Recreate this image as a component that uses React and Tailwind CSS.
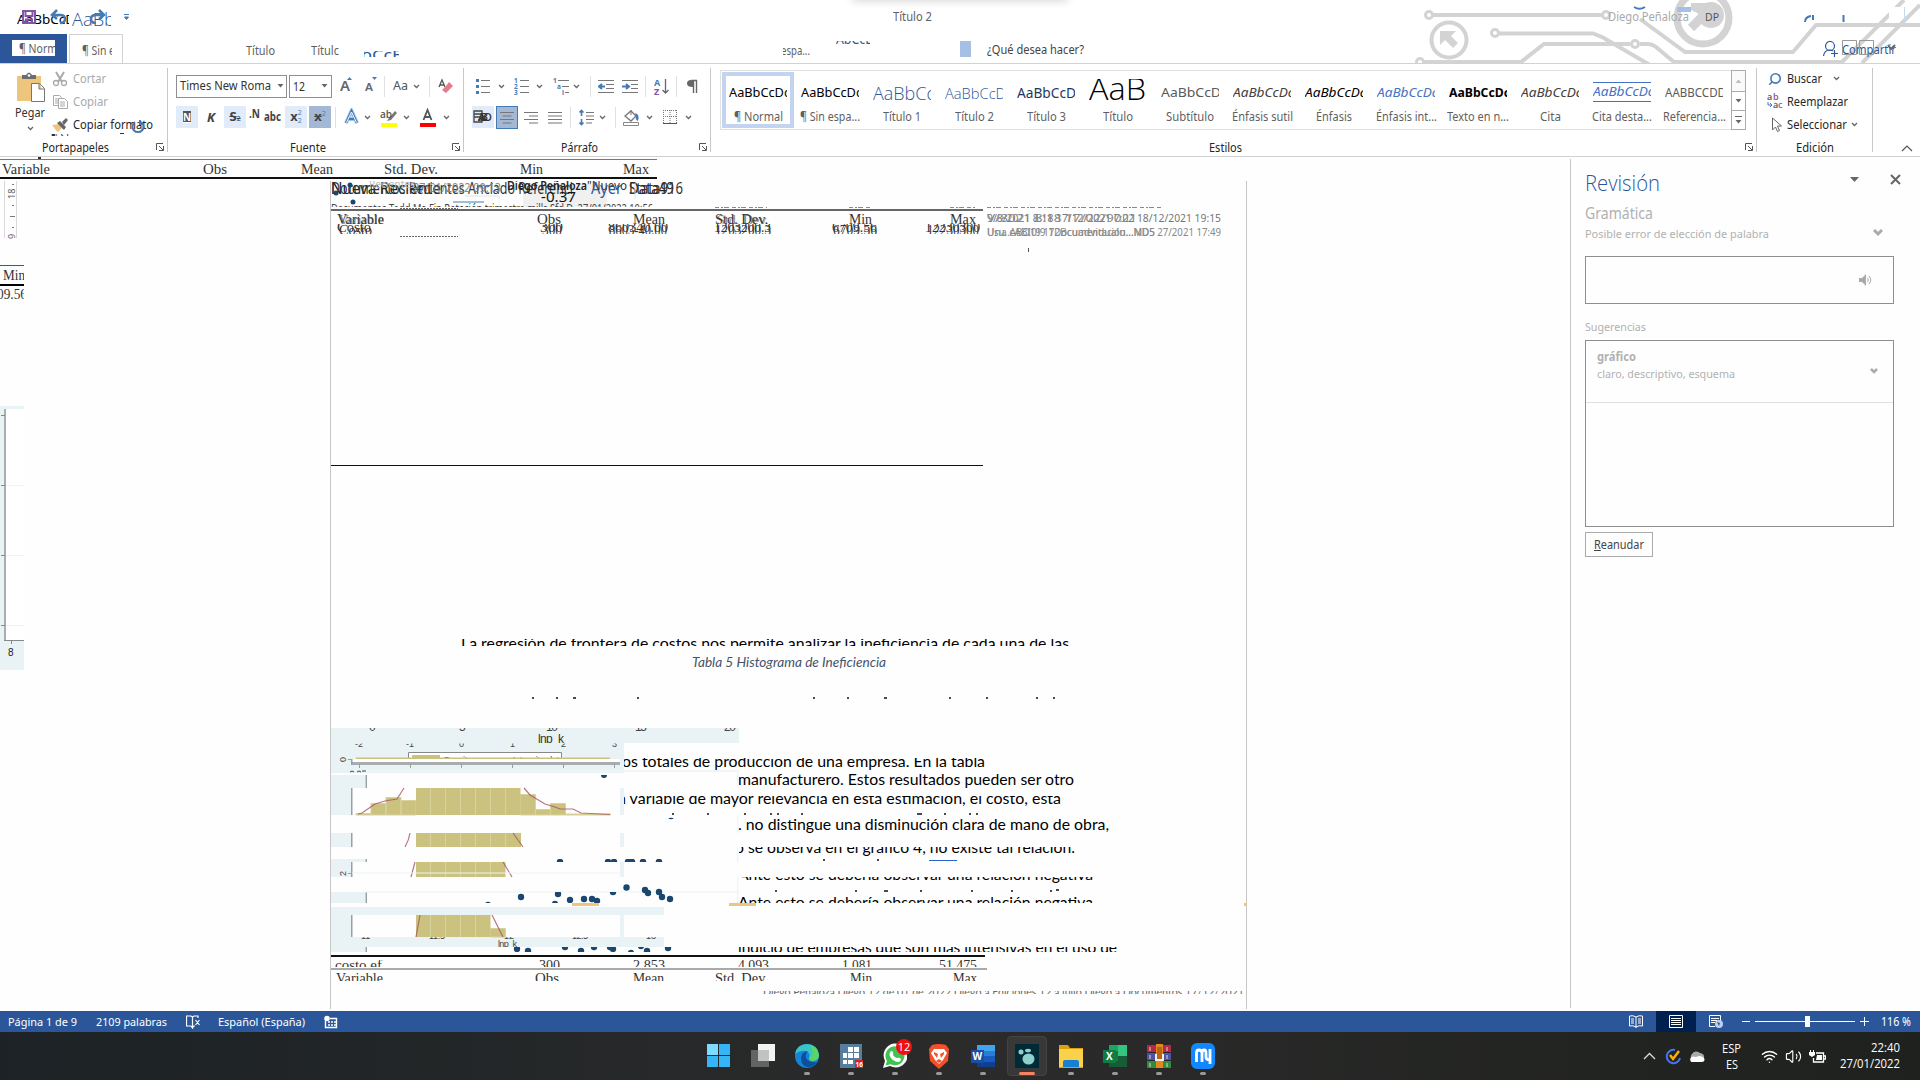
import React, { useLayoutEffect, useRef } from "react";
import { Search, Wifi, Volume2 } from "lucide-react";

/* Text stretched horizontally so that it fills the width of its box. */
function Fit({ className = "", children }) {
  const box = useRef(null);
  const text = useRef(null);
  useLayoutEffect(() => {
    text.current.style.transform = "none";
    const w = text.current.getBoundingClientRect().width;
    if (w) text.current.style.transform = `scaleX(${box.current.getBoundingClientRect().width / w})`;
  }, [children]);
  return (
    <div ref={box} className={"shrink-0 whitespace-nowrap " + className}>
      <span ref={text} className="inline-block origin-left">{children}</span>
    </div>
  );
}

const Svg = ({ w, h, className = "", children }) => (
  <svg width={w} height={h} viewBox={`0 0 ${w} ${h}`} fill="none" className={"block shrink-0 " + className}>{children}</svg>
);
const Chev = ({ className = "" }) => (
  <Svg w={7} h={5} className={className}><path d="M1 1l2.5 2.5L6 1" stroke="#666" strokeWidth="1.3" /></Svg>
);
const Caret = ({ className = "" }) => (
  <Svg w={7} h={4} className={className}><path d="M0.5 0h6L3.5 3.5z" fill="#666" /></Svg>
);
const Sep = ({ className = "" }) => <div className={"h-[21px] w-px shrink-0 bg-[#e1e1e1] " + className} />;
const Launcher = ({ className = "" }) => (
  <Svg w={8} h={8} className={className}>
    <path d="M.5 7V.5H7M3 3l4 4M7.5 3v4.5H3" stroke="#555" />
  </Svg>
);

/* ---------------------------------------------------------------- header */
function HeaderArt() {
  return (
    <svg width="520" height="63" viewBox="1400 0 520 63" fill="none" className="absolute right-0 top-0">
      <g stroke="#d3d3d3" strokeWidth="4">
        <circle cx="1429" cy="15" r="3.5" strokeWidth="3" />
        <path d="M1433 15H1602M1640 19l45 33h108l23-27h104" strokeLinejoin="round" />
        <circle cx="1606" cy="15" r="3.5" strokeWidth="3" />
        <circle cx="1449" cy="40" r="17.5" />
        <circle cx="1495" cy="33" r="3.5" strokeWidth="3" />
        <path d="M1499 33.500h94l10 4 46 27" />
        <circle cx="1420" cy="62" r="3.5" strokeWidth="3" />
        <path d="M1424 62h97l23-18h86M1640 44h8q4 0 8 3l18 15h168l62-62M1862 63l58-58" />
        <circle cx="1635" cy="44" r="3.500" strokeWidth="3" />
        <circle cx="1703" cy="18" r="26" strokeWidth="7" />
        <path d="M1691 28l20-20" strokeWidth="9" />
      </g>
      <path d="M1440 31h16l-5 5 7 7-5 5-8-8-5 5zM1691 3h22v20h-4l-8-8-10-5z" fill="#d3d3d3" />
      <circle cx="1711" cy="15" r="13" fill="#d3d3d3" />
      <path d="M1889 7h14l-14 16z" fill="#fff" />
      <path d="M1677 7h14v5h-14z" fill="#a5bfe5" />
      <path d="M1634 7q5.500 3.500 11 0" stroke="#457ab5" strokeWidth="2" />
      <path d="M1805 22q0-5 6-6M1813 15v5M1843.500 15v7" stroke="#457ab5" strokeWidth="2" />
      <path d="M1904.500 7v16" stroke="#c8d9ef" />
    </svg>
  );
}

function Header() {
  return (
    <header className="relative h-16 overflow-hidden border-b border-[#d2d2d2] bg-white">
      <HeaderArt />
      <div className="absolute -top-1 left-[852px] h-1 w-[216px] shadow-[0_0_8px_rgba(0,0,0,0.28)]" />
      <div className="relative flex h-[34px] items-center">
        <div className="relative ml-[17px] mt-[3px] h-5 w-[52px] shrink-0 overflow-hidden">
          <Fit className="w-[58px] text-[13px] leading-5 text-black">AaBbCcD</Fit>
        </div>
        <div className="ml-[3px] mt-[3px] h-6 w-[39px] shrink-0 overflow-hidden">
          <Fit className="w-[43px] font-['Open_Sans',sans-serif] text-[19px] font-light leading-6 text-[#2b579a]">AaBb</Fit>
        </div>
        <Svg w={7} h={7} className="ml-[12px]"><path d="M1 .5h5M1.500 3h4L3.500 5.500z" stroke="#457ab5" fill="#457ab5" /></Svg>
        <Fit className="ml-[763px] w-[39px] text-[12px] text-[#5f5f5f]">Título 2</Fit>
        <Fit className="ml-[676px] w-[81px] text-[12px] leading-[16px] text-[#aaa]">Diego Peñaloza</Fit>
        <Fit className="ml-[16px] w-[14px] text-[11px] leading-[14px] text-[#555]">DP</Fit>
        <div className="absolute left-[22px] top-[10px]">
          <Svg w={14} h={14}><path d="M1 1h12v12H1z M3.500 1v5h7V1M4 13V9.500h6V13" stroke="#8254a5" strokeWidth="2" /></Svg>
        </div>
        <div className="absolute left-[50px] top-[9px]">
          <Svg w={18} h={16}><path d="M2 6h8q5 0 5 4t-5 4M7 1L2 6l5 4" stroke="#457ab5" strokeWidth="2.500" /></Svg>
        </div>
        <div className="absolute left-[89px] top-[9px]">
          <Svg w={17} h={16}><path d="M15 6H7Q2 6 2 10t5 4M10 1l5 5-5 4" stroke="#457ab5" strokeWidth="2.500" /></Svg>
        </div>
      </div>
      <div className="relative flex h-[30px] items-start text-[12px] text-[#5f5f5f]">
        <div className="flex h-[29px] w-[67px] shrink-0 bg-[#2b579a] pl-3 pt-[6px]">
          <div className="h-4 w-[43px] overflow-hidden bg-white pl-[7px]">
            <Fit className="w-[38px] leading-[18px]">¶ Norm</Fit>
          </div>
        </div>
        <div className="ml-[2px] h-[30px] w-[54px] shrink-0 border border-b-0 border-[#d2d2d2] bg-white pl-3">
          <div className="w-[30px] overflow-hidden"><Fit className="w-[33px] leading-[31px]">¶ Sin e</Fit></div>
        </div>
        <Fit className="ml-[123px] w-[29px] leading-[33px]">Título</Fit>
        <Fit className="ml-[36px] w-[28px] leading-[33px]">Títulc</Fit>
        <div className="ml-[25px] mt-[17px] h-[6px] w-[35px] shrink-0 overflow-hidden">
          <Fit className="-ml-[3px] -mt-[6px] w-[41px] text-[14px] leading-5 text-[#2b579a]">bCcE</Fit>
        </div>
        <div className="ml-[384px] w-[27px] shrink-0 overflow-hidden"><Fit className="-ml-[2px] w-[29px] leading-[33px]">espa...</Fit></div>
        <div className="ml-[26px] mt-[7px] h-[3px] w-[34px] shrink-0 overflow-hidden">
          <Fit className="-mt-[13px] w-[36px] text-[15px] leading-5 text-[#2b579a]">AbCcE</Fit>
        </div>
        <div className="ml-[90px] mt-[7px] h-4 w-[11px] shrink-0 bg-[#a5bfe5]" />
        <Fit className="ml-[16px] w-[97px] leading-[31px] text-[#444]">¿Qué desea hacer?</Fit>
        <Svg w={16} h={17} className="ml-[739px] mt-[7px]">
          <circle cx="7" cy="5" r="4.500" stroke="#2b579a" strokeWidth="1.200" />
          <path d="M.500 15q1-6 6-6 2 0 3.500 1M8 12.500h7M11.500 9v7" stroke="#2b579a" strokeWidth="1.200" />
        </Svg>
        <div className="relative ml-[3px]">
          <Fit className="w-[54px] leading-[31px] text-[#2b579a]">Compartir</Fit>
          <Svg w={54} h={16} className="absolute left-0 top-[6px]">
            <path d="M.500.500h14v14H.500zM17.500.500h14v14h-14z" stroke="#999" />
            <path d="M46 5l3 4 4-4" stroke="#666" strokeWidth="2" />
          </Svg>
        </div>
      </div>
    </header>
  );
}

/* ---------------------------------------------------------------- ribbon */
const Group = ({ className, label, launcher = true, labelClass, children }) => (
  <section className={"relative flex h-[92px] shrink-0 flex-col " + className}>
    {children}
    <div className="mt-auto flex h-[18px] items-center">
      <Fit className={"pt-[2px] text-[12px] leading-[18px] text-[#262626] " + labelClass}>{label}</Fit>
      {launcher && <Launcher className="ml-auto mr-[4px]" />}
    </div>
    <div className="absolute right-0 top-1 h-[84px] w-px bg-[#c8c8c8]" />
  </section>
);

function Clipboard() {
  return (
    <Group className="w-[168px]" label="Portapapeles" labelClass="ml-[42px] w-[67px]">
      <div className="flex">
        <div className="ml-[14px] flex w-[32px] shrink-0 flex-col items-center pt-[7px]">
          <Svg w={30} h={32}>
            <path d="M2 5h24v25H2z" fill="#eec57c" />
            <path d="M7 8V4h4q3-5 6 0h4v4z" fill="#6d6d6d" /><circle cx="14" cy="4.500" r="1.300" fill="#fff" />
            <path d="M16.500 12.500h8l5 5v13h-13zM24 13v5h5" fill="#fff" stroke="#777" />
          </Svg>
          <Fit className="w-[30px] text-[12px] leading-5 text-[#333]">Pegar</Fit>
          <Chev className="mt-[3px]" />
        </div>
        <div className="ml-[6px] mt-[3px] text-[12px]">
          <div className="flex h-[23px] items-center text-[#aaa]">
            <Svg w={16} h={16}><path d="M4 1l6 10M12 1L6 11" stroke="#aaa" strokeWidth="2" /><circle cx="4" cy="12" r="2.500" stroke="#aaa" strokeWidth="1.300" /><circle cx="12" cy="12" r="2.500" stroke="#aaa" strokeWidth="1.300" /></Svg>
            <Fit className="ml-[5px] w-[33px]">Cortar</Fit>
          </div>
          <div className="flex h-[23px] items-center text-[#aaa]">
            <Svg w={16} h={16}><path d="M1.500 1.500h6l2 2v8h-8zM3 5h4M3 7h4M3 9h3" stroke="#aaa" /><path d="M6.500 4.500h6l3 3v7h-9zM8 8h5M8 10h5M8 12h5" fill="#fff" stroke="#aaa" /></Svg>
            <Fit className="ml-[5px] w-[35px]">Copiar</Fit>
          </div>
          <div className="relative flex h-[23px] items-center text-[#262626]">
            <Svg w={16} h={16}><path d="M0 8l7-1 3 4-4 4q-2-1-3-3z" fill="#eec57c" /><path d="M5 6l3-2 6 6-2 3zM10 5l4-4 2 2-4 5z" fill="#666" /></Svg>
            <Fit className="ml-[5px] w-[80px]">Copiar formato</Fit>
            <Svg w={14} h={15} className="absolute left-[79px] top-[6px]"><path d="M4 3A5.500 5.500 0 1 0 10 3M9 1v4h4" stroke="#457ab5" strokeWidth="2" /></Svg>
            <div className="absolute left-[-1px] top-[21px] h-[2px] w-[20px] overflow-hidden"><Fit className="-mt-[3px] w-[18px] text-[12px] leading-3 text-[#333]">¶ Si</Fit></div>
            <div className="absolute left-[68px] top-[20px] h-px w-[4px] bg-[#333]" />
          </div>
        </div>
      </div>
    </Group>
  );
}

function Fuente() {
  return (
    <Group className="w-[296px]" label="Fuente" labelClass="ml-[122px] w-[36px]">
      <div className="mt-[10px] flex h-6 items-center text-[12px] text-[#333]">
        <div className="ml-[8px] flex h-[23px] w-[111px] shrink-0 items-center border border-[#8e8e8e]"><Fit className="ml-[3px] w-[91px] pt-px text-[12.500px]">Times New Roma</Fit><Caret className="ml-[6px]" /></div>
        <div className="ml-[2px] flex h-[23px] w-[43px] shrink-0 items-center border border-[#8e8e8e]"><Fit className="ml-[3px] w-[12px] pt-px">12</Fit><Caret className="ml-[16px]" /></div>
        <div className="relative ml-[8px] w-4"><Fit className="w-[10px] text-[14px] font-semibold leading-5 text-[#666]">A</Fit><Svg w={5} h={3} className="absolute right-1 top-[1px]"><path d="M0 3h5L2.500 0z" fill="#457ab5" /></Svg></div>
        <div className="relative ml-[9px] w-4"><Fit className="mt-px w-[8px] text-[11px] font-semibold leading-5 text-[#666]">A</Fit><Svg w={5} h={3} className="absolute right-1 top-[1px]"><path d="M0 0h5L2.500 3z" fill="#457ab5" /></Svg></div>
        <Sep className="ml-[3px]" />
        <Fit className="ml-[8px] w-[15px] text-[13px] text-[#555]">Aa</Fit><Chev className="ml-[5px]" />
        <Sep className="ml-[9px]" />
        <Svg w={16} h={17} className="ml-[8px]"><path d="M1 9L4 2l3 7M2 7h4" stroke="#555" strokeWidth="1.300" /><path d="M8 8l3-4 4 4-7 7-4-3z" fill="#e8798c" /></Svg>
      </div>
      <div className="mt-[7px] flex h-6 items-center text-[#444]">
        <div className="ml-[8px] flex h-[22px] w-[22px] shrink-0 items-center justify-center bg-[#e1ebfa]"><span className="bg-[#555] text-[10px] font-bold leading-3 text-white underline">N</span></div>
        <div className="ml-[2px] flex h-[22px] w-[22px] shrink-0 items-center justify-center text-[13px] font-bold italic"><Fit className="w-[8px] leading-5">K</Fit></div>
        <div className="ml-[2px] flex h-[22px] w-[22px] shrink-0 items-center justify-center bg-[#e1ebfa] text-[13px] font-bold line-through">S<sub className="text-[7px] text-[#457ab5]">2</sub></div>
        <Fit className="-mt-[6px] ml-[3px] w-[11px] text-[12px] font-bold leading-4">.N</Fit>
        <Fit className="ml-[4px] w-[17px] text-[12px] font-bold line-through">abc</Fit>
        <div className="ml-[4px] flex h-[22px] w-[22px] shrink-0 items-center justify-center bg-[#e1ebfa]"><b className="text-[13px]">x</b><span className="flex flex-col text-[7px] leading-[8px] text-[#457ab5]"><span>2</span><span>2</span></span></div>
        <div className="ml-[2px] flex h-[22px] w-[22px] shrink-0 items-center justify-center bg-[#a3b8d4]"><b className="text-[13px] line-through">x</b><sup className="text-[7px] text-[#457ab5]">2</sup></div>
        <Sep className="ml-[4px]" />
        <Svg w={16} h={18} className="ml-[8px]"><path d="M2 15L7.500 3 13 15M4.500 11h6" stroke="#a9c6ea" strokeWidth="4" /><path d="M2 15L7.500 3 13 15M4.500 11h6" stroke="#457ab5" strokeWidth="2.200" /><path d="M2.500 14.500L7.500 4l5 10.500" stroke="#fff" strokeWidth="1" /></Svg>
        <Chev className="ml-[4px]" />
        <Svg w={18} h={19} className="ml-[9px]"><path d="M9 10l6-7 2 2-6 7-4 1z" fill="#777" /><path d="M1 15h16v4H1z" fill="#ff0" /><text x="0" y="10" fontSize="10" fontWeight="600" fill="#555" fontFamily="Open Sans">ab</text></Svg>
        <Chev className="ml-[5px]" />
        <Svg w={18} h={19} className="ml-[9px]"><path d="M4.500 12L8.500 2l4 10M6 9h5" stroke="#555" strokeWidth="1.800" /><path d="M1 15h16v4H1z" fill="#f00" /></Svg>
        <Chev className="ml-[6px]" />
      </div>
    </Group>
  );
}

const Lines = ({ d }) => <path d={d} stroke="#777" strokeWidth="1.200" />;

function Parrafo() {
  return (
    <Group className="w-[247px]" label="Párrafo" labelClass="ml-[97px] w-[37px]">
      <div className="mt-[10px] flex h-6 items-center">
        <Svg w={14} h={15} className="ml-[12px]"><Lines d="M5 1.500h9M5 7.500h9M5 13.500h9" /><path d="M0 0h3v3H0zM0 6h3v3H0zM0 12h3v3H0z" fill="#457ab5" /></Svg>
        <Chev className="ml-[8px]" />
        <Svg w={16} h={17} className="ml-[9px]"><Lines d="M6 2.500h9M6 8.500h9M6 14.500h9" /><g fill="#457ab5" fontFamily="Open Sans" fontSize="6.500" fontWeight="700"><text x="0" y="5">1</text><text x="0" y="11">2</text><text x="0" y="17">3</text></g></Svg>
        <Chev className="ml-[6px]" />
        <Svg w={17} h={17} className="ml-[10px]"><Lines d="M5 2.500h11M9 8.500h7M12 14.500h4" /><g fill="#457ab5" fontFamily="Open Sans" fontSize="6.500" fontWeight="700"><text x="0" y="5">1</text><text x="4" y="11">a</text><text x="9" y="17">i</text></g></Svg>
        <Chev className="ml-[3px]" />
        <Sep className="ml-[10px]" />
        <Svg w={16} h={15} className="ml-[7px]"><Lines d="M0 1.500h16M8 5.500h8M8 9.500h8M0 13.500h16" /><path d="M7 7.500H1M4 5L1 7.500 4 10" stroke="#457ab5" strokeWidth="2" /></Svg>
        <Svg w={16} h={15} className="ml-[8px]"><Lines d="M0 1.500h16M9 5.500h7M9 9.500h7M0 13.500h16" /><path d="M0 7.500h6M4 5l3 2.500L4 10" stroke="#457ab5" strokeWidth="2" /></Svg>
        <Sep className="ml-[7px]" />
        <Svg w={16} h={17} className="ml-[8px]"><g fontFamily="Open Sans" fontSize="9" fontWeight="700"><text x="0" y="8" fill="#457ab5">A</text><text x="0" y="17" fill="#8254a5">Z</text></g><path d="M11.500 1v14M8.500 12l3 3 3-3" stroke="#666" strokeWidth="1.300" /></Svg>
        <Sep className="ml-[6px]" />
        <Svg w={14} h={15} className="ml-[9px]"><path d="M11 1.500H5M7.500 1v13M10.500 1v13" stroke="#666" strokeWidth="1.400" /><path d="M7 1v7Q1 8 1 4.500T5 1z" fill="#666" /></Svg>
      </div>
      <div className="mt-[7px] flex h-6 items-center">
        <div className="ml-[8px] flex h-[22px] w-[22px] shrink-0 items-center bg-[#e1ebfa]"><Svg w={20} h={14} className="ml-px"><path d="M1 1h8v11H1zM1 4h9M1 7h9M5 10h8" stroke="#444" strokeWidth="1.300" /><text x="5" y="11" fontSize="11" fontWeight="600" fill="#333" fontFamily="Open Sans" textLength="14">ABO</text></Svg></div>
        <div className="ml-[2px] flex h-[23px] w-[22px] shrink-0 items-center justify-center border border-[#457ab5] bg-[#a3b8d4]"><Svg w={14} h={13}><Lines d="M0 1.500h14M2.500 5h9M0 8.500h14M2.500 12h9" /></Svg></div>
        <Svg w={14} h={13} className="ml-[6px]"><Lines d="M0 1.500h14M5 5h9M0 8.500h14M5 12h9" /></Svg>
        <Svg w={14} h={13} className="ml-[10px]"><Lines d="M0 1.500h14M0 5h14M0 8.500h14M0 12h14" /></Svg>
        <Sep className="ml-[8px]" />
        <Svg w={16} h={17} className="ml-[8px]"><Lines d="M7 3.500h8M7 7h8M7 10.500h8M7 14h6" /><path d="M2.500 1v6M2.500 10v6M.5 3.500l2-2 2 2M.5 13.500l2 2 2-2" stroke="#457ab5" strokeWidth="1.600" /></Svg>
        <Chev className="ml-[4px]" />
        <Sep className="ml-[9px]" />
        <Svg w={17} h={17} className="ml-[7px]"><path d="M2 7l6-5 5 5-5 5z" fill="#fff" stroke="#777" strokeWidth="1.300" /><path d="M8 1v5" stroke="#777" /><path d="M12 4q5 1 3 8-3-1-2-5z" fill="#457ab5" /><path d="M.5 13.500h15v3H.5z" stroke="#888" fill="#fff" /></Svg>
        <Chev className="ml-[6px]" />
        <Svg w={14} h={14} className="ml-[10px]"><path d="M.5 0v13M7 0v13M13.500 0v13M0 .5h14M0 6.500h14" stroke="#777" strokeDasharray="1 1" /><path d="M0 13.500h14" stroke="#555" /></Svg>
        <Chev className="ml-[8px]" />
      </div>
    </Group>
  );
}

const STYLES = [
  ["¶ Normal", "w-[49px]", "AaBbCcDc", "w-[61px] text-[13px] text-black"],
  ["¶ Sin espa...", "w-[60px]", "AaBbCcDc", "w-[61px] text-[13px] text-black"],
  ["Título 1", "w-[38px]", "AaBbCc", "w-[62px] text-[18px] font-light font-['Open_Sans',sans-serif] text-[#2b579a]"],
  ["Título 2", "w-[39px]", "AaBbCcD", "w-[61px] text-[15px] font-light font-['Open_Sans',sans-serif] text-[#2b579a]"],
  ["Título 3", "w-[39px]", "AaBbCcD", "w-[59px] text-[13.500px] text-[#1f3763]"],
  ["Título", "w-[30px]", "AaB", "w-[57px] pb-[7px] text-[31px] font-light font-['Open_Sans',sans-serif] text-black leading-[24px]"],
  ["Subtítulo", "w-[48px]", "AaBbCcD", "w-[60px] text-[13px] text-[#5a5a5a]"],
  ["Énfasis sutil", "w-[61px]", "AaBbCcDc", "w-[61px] text-[13px] italic text-[#404040]"],
  ["Énfasis", "w-[36px]", "AaBbCcDc", "w-[61px] text-[13px] italic text-black"],
  ["Énfasis int...", "w-[61px]", "AaBbCcDc", "w-[61px] text-[13px] italic text-[#4472c4]"],
  ["Texto en n...", "w-[62px]", "AaBbCcDc", "w-[61px] text-[13px] font-bold text-black"],
  ["Cita", "w-[21px]", "AaBbCcDc", "w-[61px] text-[13px] italic text-[#404040]"],
  ["Cita desta...", "w-[60px]", "AaBbCcDc", "w-[61px] text-[13px] italic text-[#4472c4]"],
  ["Referencia...", "w-[63px]", "AABBCCDD", "w-[61px] text-[12px] text-[#5a5a5a] [font-variant:small-caps]"],
];

function Estilos() {
  return (
    <Group className="w-[1046px]" label="Estilos" labelClass="ml-[498px] w-[33px]">
      <div className="ml-[9px] mt-[6px] flex h-[60px] w-[1026px] shrink-0 border border-[#e1e1e1]">
        {STYLES.map(([name, w, sample, cls], i) => (
          <div key={i} className={i === 0 ? "flex h-[56px] w-[72px] mt-px ml-px shrink-0 flex-col items-center border-4 border-[#c2d4f0]" : "mt-px flex h-[56px] w-[72px] shrink-0 flex-col items-center pt-1"}>
            <div className={i === 12 ? "mt-[6px] flex h-5 w-[58px] shrink-0 items-center overflow-hidden border-y border-[#4472c4]" : i === 5 ? "mt-[3px] flex h-6 w-[58px] shrink-0 items-center overflow-hidden" : "mt-[5px] flex h-6 w-[58px] shrink-0 items-center overflow-hidden"}>
              <Fit className={cls}>{sample}</Fit>
            </div>
            <Fit className={(i === 12 ? "mt-[6px] " : i === 5 ? "mt-[5px] " : "mt-[3px] ") + "text-[12px] leading-[18px] text-[#5f5f5f] " + w}>{name}</Fit>
          </div>
        ))}
        <div className="-my-px -mr-px ml-auto flex w-[15px] flex-col border border-[#ababab]">
          <div className="flex h-[20px] items-center justify-center bg-[#fafafa]"><Caret className="rotate-180 opacity-40" /></div>
          <div className="flex h-[20px] items-center justify-center border-y border-[#ababab]"><Caret /></div>
          <div className="flex flex-1 flex-col items-center justify-center gap-[3px]"><div className="h-px w-[7px] bg-[#666]" /><Caret /></div>
        </div>
      </div>
    </Group>
  );
}

function Ribbon() {
  return (
    <div className="flex h-[93px] border-b border-[#d2d2d2] bg-white">
      <Clipboard />
      <Fuente />
      <Parrafo />
      <Estilos />
      <Group className="w-[116px]" label="Edición" labelClass="ml-[39px] w-[38px]" launcher={false}>
        <div className="ml-[11px] mt-[3px] text-[12px] text-[#262626]">
          <div className="flex h-[23px] items-center"><Search size={14} strokeWidth={2.800} color="#457ab5" className="-scale-x-100" /><Fit className="ml-[5px] w-[35px]">Buscar</Fit><Chev className="ml-[11px]" /></div>
          <div className="flex h-[23px] items-center">
            <Svg w={17} h={17} className="-ml-px"><g fontFamily="Open Sans" fontSize="9" fontWeight="600"><text x="0" y="7" fill="#555">a</text><text x="6" y="7" fill="#8254a5">b</text><text x="6" y="15" fill="#555">a</text><text x="11" y="15" fill="#457ab5">c</text></g><path d="M1 9v3h3M3 10l2 2-2 2" stroke="#457ab5" /></Svg>
            <Fit className="ml-[3px] w-[61px]">Reemplazar</Fit>
          </div>
          <div className="flex h-[23px] items-center"><Svg w={14} h={16}><path d="M4.500 1v12l3-3 2 4.500 2-1-2-4.500h4z" stroke="#666" /></Svg><Fit className="ml-[5px] w-[60px]">Seleccionar</Fit><Chev className="ml-[4px]" /></div>
        </div>
      </Group>
      <Svg w={12} h={7} className="mb-[4px] ml-[28px] self-end"><path d="M1 6l5-5 5 5" stroke="#555" strokeWidth="1.200" /></Svg>
    </div>
  );
}

/* -------------------------------------------------------------- document */
const Serif = ({ className, children }) => <Fit className={"absolute font-['Liberation_Serif',serif] text-[15px] leading-5 text-[#333] " + className}>{children}</Fit>;
const Band = ({ className, inner, children }) => (
  <div className={"absolute overflow-hidden " + className}>
    <Fit className={"font-[Lato,sans-serif] text-[16px] leading-5 text-black " + inner}>{children}</Fit>
  </div>
);

const BG = "#e9f2f4";
const KH = "#cac27e";
const DOTS = [[521, 897], [570, 900], [584, 899], [592, 899], [597, 901], [555, 904], [488, 905], [558, 894], [613, 892], [645, 890], [648, 893], [659, 892], [662, 897], [670, 899]];
const LOW = [[517, 949], [528, 951], [565, 947], [581, 951], [594, 947], [610, 947], [613, 949], [631, 953], [641, 946], [647, 951], [668, 948]];

function Charts() {
  return (
    <svg width="420" height="235" viewBox="331 725 420 235" className="absolute left-[331px] top-[725px]" fontFamily="Liberation Sans" fontSize="9" fill="#444">
      <defs>
        <clipPath id="k1"><path d="M331 728h410v15H331z" /></clipPath>
        <clipPath id="k2"><path d="M331 743.500h300v15H331z" /></clipPath>
        <clipPath id="k3"><path d="M331 775h410v13H331z" /></clipPath>
        <clipPath id="k4"><path d="M331 859h410v3H331z" /></clipPath>
        <clipPath id="k5"><path d="M331 892h293v11H331zM624 877h117v26H624z" /></clipPath>
        <clipPath id="k6"><path d="M331 947h410v5H331z" /></clipPath>
        <clipPath id="k7"><path d="M331 937h410v10H331z" /></clipPath>
      </defs>
      <path d="M331 728h408v15H624v30H331zM331 775h34v13h-13v27h-21zM331 833h21v14h-21zM331 859h34v3h-13v15h-21zM331 892h34v11h-34zM331 907h333v8H331zM331 915h21v22h-21zM331 937h333v10H331zM331 947h34v5h-34zM620 788h4v27h-4zM620 833h4v14h-4zM620 862h4v15h-4zM620 915h4v22h-4z" fill={BG} />
      <path d="M365 770h374v2H365zM737 770h1.500v18H737zM737 815h1.500v18H737zM737 847h1.500v15H737zM737 877h1.500v26H737z" fill="#eff5f6" />
      <path d="M352 759h268v11H352z" fill="#fff" />
      <path d="M352 762h268v3H352z" fill="#a8adb0" />
      <path d="M331 765h289v5H331z" fill={BG} />
      <g fill="#999fa3">
        <path d="M351 759h1.500v6H351zM351 788h1.500v27H351zM351 833h1.500v14H351zM351 862h1.500v15H351zM351 915h1.500v22H351zM365.500 775h1.500v13h-1.500zM365.500 859h1.500v3h-1.500zM365.500 892h1.500v11h-1.500zM365.500 947h1.500v5h-1.500z" />
        <path d="M359 764h1v4h-1zM410 764h1v4h-1zM461 764h1v4h-1zM512 764h1v4h-1zM563 764h1v4h-1zM614 764h1v4h-1zM348 759h4v1h-4zM348 873h4v1h-4z" />
      </g>
      <g clipPath="url(#k1)" fontSize="12">
        <text x="369" y="731">0</text><text x="459" y="731">5</text><text x="546" y="731" textLength="12">10</text><text x="635" y="731" textLength="12">15</text><text x="724" y="731" textLength="12">20</text>
        <text x="538" y="743" textLength="26" fill="#333">lnp_k</text>
      </g>
      <g clipPath="url(#k2)">
        <text x="355" y="747">-2</text><text x="406" y="747">-1</text><text x="459" y="747">0</text><text x="510" y="747">1</text><text x="561" y="747">2</text><text x="612" y="747">3</text>
        <path d="M408.500 752.500h153v8h-153z" fill="#fff" stroke="#888" /><path d="M412 755h28v4h-28z" fill={KH} />
        <text x="444" y="763" textLength="27">Density</text><text x="513" y="763" textLength="46">Intensity plot</text>
      </g>
      <path d="M356 757.500h254v1.500H356z" fill={KH} />
      <text transform="translate(346 762) rotate(-90)">0</text>
      <text transform="translate(346 876) rotate(-90)">2</text>
      <path d="M350 772q2-2 4 0M357 772q2-2 4 0M362 771h4" stroke="#444" fill="none" />
      <g stroke="#d8d29b" fill={KH}>
        <path d="M356 813.500h15V815h-15zM371 803.500h15V815h-15zM386 797.500h15V815h-15zM401 800.500h15V815h-15zM520.500 794.500h15V815h-15zM535.500 809.500h15V815h-15zM550.500 803.500h15V815h-15zM565.500 814h45v1h-45zM490.500 928.500h15V937h-15z" />
      </g>
      <path d="M416 788h104.500v27H416zM416 833h105v14H416zM416 862h89.500v15H416zM416 915h74.500v22H416z" fill={KH} />
      <path d="M430.500 788v27M445.500 788v27M460.500 788v27M475.500 788v27M490.500 788v27M505.500 788v27M430.500 833v14M445.500 833v14M460.500 833v14M475.500 833v14M490.500 833v14M505.500 833v14M430.500 862v15M445.500 862v15M460.500 862v15M475.500 862v15M490.500 862v15M430.500 915v22M445.500 915v22M460.500 915v22M475.500 915v22" stroke="#d8d29b" />
      <path d="M358 814l4-1 13-9 10-3 12-2 7-11M524 788l6 7 15 9 10 3 5 2h13l8 4 29 1.500M410 833q-1 7-5 14M513 833l10 14M415 862l-4 15M503 862l9 15M420 915l-4 22M492 915l11 22" fill="none" stroke="#a85560" strokeWidth="1.200" strokeOpacity=".8" />
      <path d="M352 873h268M365 892h374" stroke="#eef4f5" />
      <g fill="#1a476f">
        <g clipPath="url(#k3)"><circle cx="604" cy="775" r="3" /></g>
        <ellipse cx="671" cy="818.500" rx="2.500" ry=".8" />
        <g clipPath="url(#k4)">{[560, 608, 614, 628, 632, 643, 659].map((x) => <circle key={x} cx={x} cy={862} r="3.300" />)}</g>
        <g clipPath="url(#k5)">{DOTS.map(([x, y], i) => <circle key={i} cx={x} cy={y} r="3.200" />)}</g>
        <circle cx="626.500" cy="887.500" r="3.200" />
        <g clipPath="url(#k6)">{LOW.map(([x, y], i) => <circle key={i} cx={x} cy={y} r="3.200" />)}</g>
      </g>
      <path d="M572 903h27v3h-27zM729 903h22v3h-22z" fill="#eec57c" />
      <g clipPath="url(#k7)">
        <text x="361" y="939">11</text><text x="429" y="939" textLength="16">11.5</text><text x="504" y="939">12</text><text x="572" y="939" textLength="16">12.5</text><text x="646" y="939">13</text>
        <text x="498" y="947" textLength="19">lnp_k</text>
      </g>
    </svg>
  );
}

/* Slivers of ascenders left over from partly painted lines. */
const Slivers = () => (
  <svg width="560" height="200" viewBox="520 695 560 200" className="absolute left-[520px] top-[695px]">
    <path d="M532 698h2M556 698h2M573 698h3M637 698h2M813 698h2M847 698h2M884 698h3M949 698h2M986 698h2M1036 698h2M1053 698h2M672 814h2M707 814h2M744 814h2M770 814h2M777 814h2M801 814h2M917 814h5M944 814h2M969 814h2M976 814h2M823 860h2M877 860h2M775 891h2M855 891h2M884 891h4M920 891h2M971 891h2M1011 891h2M1050 891h2M1056 890h3" stroke="#111" strokeWidth="1.600" />
    <path d="M929 860.500h28" stroke="#2a62d0" />
  </svg>
);

function LeftEdge() {
  return (
    <>
      <svg width="26" height="60" viewBox="0 180 26 60" className="absolute left-0 top-[180px]" fontFamily="Open Sans" fontSize="9" fill="#555">
        <path d="M4.500 181v57M16.500 181v57" stroke="#d8d8d8" />
        <path d="M12 184.500h2M12 205.500h2M10 216.500h5M12 227.500h2" stroke="#777" />
        <text transform="translate(15 199) rotate(-90)">18</text><text transform="translate(15 239) rotate(-90)">9</text>
      </svg>
      <div className="absolute left-0 top-[265px] h-[40px] w-6 overflow-hidden border-t border-[#555] font-['Liberation_Serif',serif] text-[15px] text-[#333]">
        <Fit className="ml-[3px] w-[22px] leading-[18px]">Min</Fit>
        <div className="h-[2px] bg-black" />
        <Fit className="-ml-[3px] w-[30px] leading-[17px]">09.56</Fit>
      </div>
      <svg width="24" height="264" viewBox="0 406 24 264" className="absolute left-0 top-[406px]" fontFamily="Liberation Sans" fontSize="10">
        <path d="M0 406h24v264H0z" fill={BG} /><path d="M6 409h18v232H6z" fill="#fff" />
        <path d="M6 485.500h18M6 555.500h18M6 625.500h18" stroke="#eef4f5" />
        <path d="M5 409v232" stroke="#a8adb0" strokeWidth="2" /><path d="M4 640.500h20M11.500 641v3M1 415.500h4M1 485.500h4M1 555.500h4M1 625.500h4" stroke="#888" />
        <text x="8" y="656" fill="#222">8</text>
      </svg>
    </>
  );
}

function TopFragments() {
  return (
    <>
      <div className="absolute left-0 top-[159px] h-px w-[657px] bg-[#777]" />
      <div className="absolute left-[38px] top-[157px] h-[2px] w-[3px] bg-[#333]" />
      <div className="absolute left-0 top-[177px] h-[2px] w-[657px] bg-[#111]" />
      <Serif className="left-[2px] top-[159px] w-[48px]">Variable</Serif>
      <Serif className="left-[203px] top-[159px] w-[24px]">Obs</Serif>
      <Serif className="left-[301px] top-[159px] w-[32px]">Mean</Serif>
      <Serif className="left-[384px] top-[159px] w-[54px]">Std. Dev.</Serif>
      <Serif className="left-[520px] top-[159px] w-[23px]">Min</Serif>
      <Serif className="left-[623px] top-[159px] w-[26px]">Max</Serif>

      <div className="absolute left-[331px] top-[181px] h-[26px] w-[360px] overflow-hidden">
        <div className="absolute left-[192px] top-[3px] h-[23px] w-[84px] bg-[#f0f0f0]" />
        <Fit className="absolute left-0 top-[-5px] w-[110px] text-[17px] leading-6 text-[#222]">Nueva Reciente</Fit>
        <Fit className="absolute left-0 top-[-5px] w-[242px] text-[17px] leading-6 text-[#333]">Documentos Recientes Anclado Referenci</Fit>
        <Fit className="absolute left-[82px] top-[-4px] w-[88px] text-[13px] leading-5 text-[#888]">27/01/2022 09:13</Fit>
        <Fit className="absolute left-[38px] top-[-5px] w-[46px] text-[11px] leading-4 text-[#bbb]">Recientes</Fit>
        <Fit className="absolute left-[176px] top-[-3px] w-[80px] text-[12px] font-semibold leading-4 text-[#222]">Diego Peñaloza</Fit>
        <Fit className="absolute left-[256px] top-[-3px] w-[40px] text-[12px] leading-4 text-[#333]">"Nuevo</Fit>
        <Fit className="absolute left-[210px] top-[5px] w-[35px] text-[15px] leading-5 text-[#111]">-0.37</Fit>
        <Fit className="absolute left-[260px] top-[-5px] w-[31px] text-[17px] leading-6 text-[#2b579a]">Ayer</Fit>
        <Fit className="absolute left-[298px] top-[-5px] w-[45px] text-[17px] leading-6 text-[#222]">Data49</Fit>
        <Fit className="absolute left-[298px] top-[-5px] w-[54px] text-[17px] leading-6 text-[#333]">Stata916</Fit>
        <Fit className="absolute left-0 top-[18px] w-[322px] text-[12px] leading-5 text-[#444]">Documentos Todd Ma Fin Rotación trimestre mills Sfd D. 27/01/2022 10:56</Fit>
        <svg width="320" height="26" className="absolute left-0 top-0" fill="none">
          <circle cx="19" cy="4" r="2.500" fill="#1a476f" /><circle cx="22" cy="21" r="2.500" fill="#1a476f" /><circle cx="5" cy="12" r="2.500" fill="#1a476f" />
          <path d="M145 8l6-4 6 2 5-4" stroke="#457ab5" /><path d="M134 15h34v3M304 2v16" stroke="#d7e6e6" /><path d="M122 21h31" stroke="#457ab5" />
        </svg>
      </div>
      <div className="absolute left-[331px] top-[209px] h-[2px] w-[652px] bg-[#666]" />
      <div className="absolute left-[331px] top-[213px] h-[11px] w-[920px] overflow-hidden">
        <Serif className="left-[6px] top-[-4px] w-[47px]">Variable</Serif><Serif className="left-[8px] top-[-3px] w-[45px] opacity-60">Variable</Serif>
        <Serif className="left-[206px] top-[-4px] w-[24px]">Obs</Serif><Serif className="left-[302px] top-[-4px] w-[32px]">Mean</Serif>
        <Serif className="left-[384px] top-[-4px] w-[53px]">Std. Dev.</Serif><Serif className="left-[386px] top-[-3px] w-[52px] opacity-60">Std. Dev.</Serif>
        <Serif className="left-[518px] top-[-4px] w-[23px]">Min</Serif><Serif className="left-[619px] top-[-4px] w-[26px]">Max</Serif>
        <Fit className="absolute left-[656px] top-[-3px] w-[234px] text-[11px] leading-4 text-[#777]">9/8/2021 8:18 17/12/2021 7:02 18/12/2021 19:15</Fit>
        <Fit className="absolute left-[656px] top-[-3px] w-[150px] text-[11px] leading-4 text-[#888]">V/8021 8:18 17/02/9021</Fit>
      </div>
      <div className="absolute left-[331px] top-[224px] h-[10px] w-[660px] overflow-hidden">
        <Serif className="left-[6px] top-[-7px] w-[34px]">Costo</Serif><Serif className="left-[8px] top-[-4px] w-[33px]">Costo</Serif>
        <Serif className="left-[209px] top-[-7px] w-[23px]">300</Serif><Serif className="left-[211px] top-[-4px] w-[20px]">300</Serif>
        <Serif className="left-[277px] top-[-7px] w-[60px]">860340.00</Serif><Serif className="left-[278px] top-[-4px] w-[58px]">8603-40.00</Serif>
        <Serif className="left-[383px] top-[-7px] w-[57px]">1203200.3</Serif><Serif className="left-[384px] top-[-4px] w-[56px]">1203200.3</Serif>
        <Serif className="left-[501px] top-[-7px] w-[45px]">6709.56</Serif><Serif className="left-[502px] top-[-4px] w-[44px]">6709.56</Serif>
        <Serif className="left-[594px] top-[-7px] w-[55px]">12230300</Serif><Serif className="left-[596px] top-[-4px] w-[52px]">12230300</Serif>
      </div>
      <div className="absolute left-[987px] top-[228px] h-[8px] w-[236px] overflow-hidden text-[11px] leading-4 text-[#888]">
        <Fit className="-mt-[4px] w-[234px]">Usu..ABO19 17Documentación...MD5 27/2021 17:49</Fit>
        <Fit className="-mt-[16px] w-[168px]">Una cABI0!9 12Bcuadvidualu...ND5</Fit>
      </div>
      <svg width="850" height="50" viewBox="390 204 850 50" className="absolute left-[390px] top-[204px]">
        <path d="M400 208.500h58M400 236.500h58" stroke="#666" strokeDasharray="2 1" />
        <path d="M715 207.500h52M849 207.500h23M950 207.500h26M987 207.500h176" stroke="#888" strokeDasharray="4 2 2 1 5 3" />
        <path d="M1028.500 248v4" stroke="#555" />
      </svg>
    </>
  );
}

function Document() {
  return (
    <div className="absolute -top-[157px] left-0 h-[1011px] w-[1570px]">
      <div className="absolute left-[330px] top-[181px] h-[828px] w-px bg-[#c6c6c6]" />
      <div className="absolute left-[1246px] top-[181px] h-[828px] w-px bg-[#c6c6c6]" />
      <LeftEdge />
      <TopFragments />
      <div className="absolute left-[331px] top-[465px] h-px w-[652px] bg-[#111]" />
      <Band className="left-[461px] top-[639px] h-[7px] w-[610px]" inner="-mt-[6px] w-[608px]">La regresión de frontera de costos nos permite analizar la ineficiencia de cada una de las</Band>
      <Band className="left-[692px] top-[650px] h-[19px] w-[200px]" inner="mt-[2px] w-[194px] text-[13.500px]! italic text-[#44546a]!">Tabla 5 Histograma de Ineficiencia</Band>
      <Band className="left-[624px] top-[758px] h-[14px] w-[380px]" inner="-ml-[2px] -mt-[7px] w-[363px]">os totales de producción de una empresa. En la tabla</Band>
      <Band className="left-[738px] top-[772px] h-[20px] w-[345px]" inner="-mt-[3px] w-[336px]">manufacturero. Estos resultados pueden ser otro</Band>
      <Band className="left-[624px] top-[796px] h-[14px] w-[440px]" inner="-ml-[7px] -mt-[8px] w-[444px]">n variable de mayor relevancia en esta estimación, el costo, esta</Band>
      <Band className="left-[738px] top-[815px] h-[18px] w-[380px]" inner="-mt-[1px] w-[371px]">. no distingue una disminución clara de mano de obra,</Band>
      <Band className="left-[739px] top-[847px] h-[11px] w-[340px]" inner="-ml-[4px] -mt-[10px] w-[340px]">o se observa en el gráfico 4, no existe tal relación.</Band>
      <Band className="left-[742px] top-[877px] h-[7px] w-[360px]" inner="-ml-[4px] -mt-[13px] w-[355px]">Ante esto se debería observar una relación negativa</Band>
      <Band className="left-[738px] top-[897px] h-[6px] w-[360px]" inner="-mt-[5px] w-[355px]">Ante esto se debería observar una relación negativa</Band>
      <Band className="left-[738px] top-[947px] h-[5px] w-[380px]" inner="-mt-[10px] w-[379px]">indicio de empresas que son más intensivas en el uso de</Band>
      <Charts />
      <Slivers />
      <div className="absolute left-[751px] top-[903px] h-[3px] w-[5px] bg-[#eec57c]" />
      <div className="absolute left-[1244px] top-[903px] h-[3px] w-[3px] bg-[#eec57c]" />
      <div className="absolute left-[331px] top-[955px] h-[2px] w-[654px] bg-[#111]" />
      <div className="absolute left-[331px] top-[960px] h-[7px] w-[656px] overflow-hidden">
        <Serif className="left-[4px] top-[-5px] w-[47px]">costo ef</Serif><Serif className="left-[208px] top-[-5px] w-[21px]">300</Serif>
        <Serif className="left-[302px] top-[-5px] w-[32px]">2,853</Serif><Serif className="left-[407px] top-[-5px] w-[31px]">4,093</Serif>
        <Serif className="left-[511px] top-[-5px] w-[30px]">1,081</Serif><Serif className="left-[608px] top-[-5px] w-[38px]">51,475</Serif>
      </div>
      <div className="absolute left-[331px] top-[968px] h-[2px] w-[656px] bg-[#aaa]" />
      <div className="absolute left-[331px] top-[971px] h-[10px] w-[656px] overflow-hidden">
        <Serif className="left-[5px] top-[-3px] w-[47px]">Variable</Serif><Serif className="left-[204px] top-[-3px] w-[24px]">Obs</Serif>
        <Serif className="left-[302px] top-[-3px] w-[31px]">Mean</Serif><Serif className="left-[384px] top-[-3px] w-[53px]">Std. Dev.</Serif>
        <Serif className="left-[519px] top-[-3px] w-[22px]">Min</Serif><Serif className="left-[622px] top-[-3px] w-[24px]">Max</Serif>
      </div>
      <Band className="left-[763px] top-[991px] h-[3px] w-[482px]" inner="-mt-[9px] w-[481px] text-[12px]! text-[#666]!">Diego Peñaloza Diego 12 de 01 de 2022 Diego a Ediciones 12 a julio Diego a Documentos 17/12/2021</Band>
    </div>
  );
}

/* ----------------------------------------------------------- review pane */
function ReviewPane() {
  return (
    <aside className="ml-auto mt-[2px] h-[849px] w-[350px] shrink-0 border-l border-[#c6c6c6] pl-[14px] text-[#b1b1b1]">
      <div className="flex h-[45px] items-center">
        <Fit className="w-[75px] font-['Open_Sans',sans-serif] text-[22px] font-light leading-8 text-[#2b579a]">Revisión</Fit>
        <Svg w={9} h={5} className="-mt-1 ml-[190px]"><path d="M0 0h9L4.500 5z" fill="#666" /></Svg>
        <Svg w={11} h={11} className="-mt-1 ml-[31px]"><path d="M1 1l9 9M10 1l-9 9" stroke="#666" strokeWidth="2" /></Svg>
      </div>
      <Fit className="w-[68px] text-[16px] leading-[19px]">Gramática</Fit>
      <div className="flex h-[22px] items-center">
        <Fit className="w-[184px] text-[11px]">Posible error de elección de palabra</Fit>
        <Svg w={10} h={8} className="-mt-[3px] ml-[104px]"><path d="M1 1l4 4 4-4" stroke="#aaa" strokeWidth="3" /></Svg>
      </div>
      <div className="mt-[11px] flex h-[48px] w-[309px] items-center border border-[#8e8e8e]">
        <Svg w={13} h={12} className="ml-[273px]"><path d="M0 4h3l4-4v12L3 8H0z" fill="#aaa" /><path d="M8.500 4q1.500 2 0 4M10 2q3.500 4 0 8" stroke="#aaa" /></Svg>
      </div>
      <Fit className="mt-[13px] w-[61px] text-[11px] leading-5">Sugerencias</Fit>
      <div className="mt-[3px] h-[187px] w-[309px] border border-[#8e8e8e]">
        <div className="flex h-[62px] border-b border-[#e1e1e1] pl-[11px] pt-[7px]">
          <div>
            <Fit className="w-[39px] text-[12px] font-bold leading-[17px]">gráfico</Fit>
            <Fit className="w-[138px] text-[11px] leading-[18px]">claro, descriptivo, esquema</Fit>
          </div>
          <Svg w={8} h={7} className="ml-[135px] mt-[20px]"><path d="M1 1l3 3 3-3" stroke="#aaa" strokeWidth="2.500" /></Svg>
        </div>
      </div>
      <button className="mt-[5px] flex h-[25px] w-[68px] items-center border border-[#ababab] bg-[#fdfdfd] pl-[8px] text-[12px] text-[#444]">
        <Fit className="w-[50px] pt-px">
          <u>R</u>eanudar
        </Fit>
      </button>
    </aside>
  );
}

/* ------------------------------------------------------------ status bar */
function StatusBar() {
  return (
    <div className="flex h-[21px] shrink-0 items-center bg-[#2b579a] text-[11px] leading-5 text-white">
      <Fit className="ml-[8px] w-[69px]">Página 1 de 9</Fit>
      <Fit className="ml-[19px] w-[71px]">2109 palabras</Fit>
      <Svg w={15} h={14} className="ml-[19px]"><path d="M6.500 13V2L5 1H.5v10H5zM6.500 2L8 1h4v2M6.500 12.500L8 11h1M9.500 5l4 5M13.500 5l-4 5" stroke="#fff" strokeWidth="1.200" /></Svg>
      <Fit className="ml-[17px] w-[87px]">Español (España)</Fit>
      <Svg w={14} h={14} className="ml-[19px]"><path d="M1.500 5.500v7h11v-9H6M4 7h2M7 7h2M10 7h2M4 10h2M7 10h2M10 10h2" stroke="#fff" strokeWidth="1.400" /><circle cx="3" cy="3.500" r="2.800" fill="#fff" /></Svg>
      <Svg w={14} h={14} className="ml-[1291px]"><path d="M7 13V2Q4 0 .5 1v10q3.500-1 6.500 1 3-2 6.500-1V1Q10 0 7 2M2 4h3M2 6h3M2 8h3M9 4h3M9 6h3M9 8h3" stroke="#fff" /></Svg>
      <div className="ml-[13px] flex h-[21px] w-10 items-center justify-center bg-[#002050]"><Svg w={14} h={13}><path d="M.5.5h13v12H.5zM2 3.500h10M2 5.500h10M2 7.500h10M2 9.500h10" stroke="#fff" /></Svg></div>
      <Svg w={15} h={14} className="ml-[13px]"><path d="M6 11.500H.5V.5h11V6M2 3.500h8M2 5.500h6M2 7.500h4" stroke="#fff" /><circle cx="10" cy="9" r="4" fill="#bcd0ee" /><path d="M8 7l3 1-1 3z" fill="#2b579a" /></Svg>
      <div className="ml-[18px] h-px w-[8px] bg-white" />
      <div className="relative ml-[5px] flex h-[21px] w-[100px] items-center">
        <div className="h-px w-full bg-white" />
        <div className="absolute left-[50px] h-[11px] w-[5px] bg-white" />
      </div>
      <Svg w={9} h={9} className="ml-[5px]"><path d="M0 4.500h9M4.500 0v9" stroke="#fff" /></Svg>
      <Fit className="ml-[12px] w-[30px] text-[12px]">116 %</Fit>
    </div>
  );
}

/* --------------------------------------------------------------- taskbar */
const APPS = [
  [<g key="w"><path d="M0 0h11v11H0zM12 0h11v11H12zM0 12h11v11H0zM12 12h11v11H12z" fill="#35b5f5" /><path d="M0 0h11v11H0z" fill="#7bdcff" /></g>, 0],
  [<g key="t"><path d="M7 0h17v17H7z" fill="#f3f3f3" /><path d="M0 6h18v17H0z" fill="#777" fillOpacity=".75" /><path d="M7 6h11v11H7z" fill="#c2c2c2" /></g>, 0],
  [<g key="e"><circle cx="12" cy="12" r="12" fill="#1583d8" /><path d="M0 10Q2 0 12 0t12 11q0 5-6 6-4 0-4-3 2-5-3-7-6-1-11 3z" fill="#38c5c9" /><path d="M15 1q8 2 9 10 0 5-6 6-4 0-4-3 7-4 1-13z" fill="#5bd664" /><path d="M6 15q0-7 7-8-3 3-2 7 2 5 11 4-4 6-10 5-6-2-6-8z" fill="#0c4f9c" /></g>, 1],
  [<g key="s"><path d="M1 0h22v24H1z" fill="#577f9d" /><path d="M9 3h5v5H9zM15 3h5v5h-5zM4 9h4v5H4zM9 9h5v5H9zM15 9h5v5h-5zM4 16h4v4H4zM9 16h5v4H9z" fill="#fff" /><path d="M16 16h8v8h-8z" fill="#d8202a" /><text x="16.500" y="23" fontSize="6.500" fontWeight="700" fill="#fff" fontFamily="Open Sans">16</text></g>, 1],
  [<g key="wa"><path d="M0 24l2-7A12 12 0 1 1 7 22z" fill="#fff" /><path d="M2.500 21.500L4 17a9.500 9.500 0 1 1 3.500 3.200z" fill="#40c351" /><path d="M8 7q3 0 2 4 2 3 4 3 4-1 4 2-2 4-8 0-6-5-2-9z" fill="#fff" /></g>, 1],
  [<g key="b"><path d="M5 1q7-2 14 0l3 4-1 12-9 8-9-8L2 5z" fill="#f4502a" /><path d="M7 5h10l3 4-4 7-4 4-4-4-4-7z" fill="#fff" /><path d="M7 8l4 2-1 4-3-4zM17 8l-4 2 1 4 3-4zM12 15l3 2-3 2-3-2z" fill="#f4502a" /></g>, 1],
  [<g key="wd"><path d="M6 1h18v22H6z" fill="#185abd" /><path d="M6 1h18v6H6z" fill="#41a5ee" /><path d="M6 7h18v5H6z" fill="#2b7cd3" /><path d="M6 18h18v5H6z" fill="#103f91" /><path d="M0 6h13v13H0z" fill="#1b4fa5" /><text x="1.500" y="16" fontSize="10" fontWeight="700" fill="#fff" fontFamily="Open Sans">W</text></g>, 1],
  [<g key="p"><path d="M0 0h24v24H0z" fill="#002b36" /><ellipse cx="13.500" cy="15" rx="6" ry="5.500" fill="#90d0cc" /><circle cx="6" cy="8" r="2.500" fill="#90d0cc" /><ellipse cx="13" cy="6.500" rx="3" ry="1.800" fill="#90d0cc" /></g>, 2],
  [<g key="f"><path d="M0 1h9l2 3h13v20H0z" fill="#dba012" /><path d="M0 5h24v18H0z" fill="#fbd04a" /><path d="M4 23v-5q0-2 2-2h12q2 0 2 2v5z" fill="#1681d4" /></g>, 1],
  [<g key="x"><path d="M6 1h18v22H6z" fill="#21a366" /><path d="M15 1h9v11h-9z" fill="#33c481" /><path d="M6 12h18v11H6z" fill="#185c37" /><path d="M6 7h9v10H6z" fill="#107c41" /><path d="M0 6h13v13H0z" fill="#107c41" /><text x="3" y="16" fontSize="10" fontWeight="700" fill="#fff" fontFamily="Open Sans">X</text></g>, 1],
  [<g key="r"><path d="M0 1h24v7H0z" fill="#b5274b" /><path d="M0 9h24v7H0z" fill="#5050a8" /><path d="M0 17h24v7H0z" fill="#2f8a43" /><path d="M9 0h7v24H9z" fill="#e08a1e" /><path d="M8 10h9v7H8z" fill="#eee" /><path d="M10 3h5v12h-5z" fill="#b86414" /><path d="M3 3v4M20 3v4M3 11v4M20 11v4M3 19v4M20 19v4" stroke="#ddb" /></g>, 1],
  [<g key="m"><rect width="24" height="26" y="-1" rx="6" fill="#1188ff" /><path d="M5.500 18V9q0-3 2.500-3t3 3v5M11 9q0-3 2-3t2 3v4q0 3 4 3M19 5v15M11 9v9" stroke="#fff" strokeWidth="2.800" fill="none" strokeLinejoin="round" /></g>, 1],
];

function Taskbar() {
  return (
    <div className="relative flex h-12 shrink-0 bg-linear-to-r from-[#1c2225] via-[#2b2b2b] to-[#1e211d] font-['Open_Sans',sans-serif] text-[12px] text-white">
      <div className="ml-[697px] flex">
        {APPS.map(([icon, state], i) => (
          <div key={i} className="relative flex w-11 justify-center">
            <div className={state === 2 ? "mt-1 h-10 w-10 rounded border border-[#444] bg-[#383838]" : "mt-1 h-10 w-10"}>
              <svg width="24" height="26" viewBox="0 -1 24 26" className={state === 2 ? "ml-[7px] mt-[6px]" : "ml-2 mt-[7px]"}>{icon}</svg>
            </div>
            {state > 0 && <div className={state === 2 ? "absolute top-[40px] h-[3px] w-4 rounded bg-[#f4845f]" : "absolute top-[40px] h-[3px] w-[6px] rounded bg-[#999]"} />}
            {i === 4 && <div className="absolute left-[23px] top-[7px] flex h-4 w-4 items-center justify-center rounded-full bg-[#f01010] text-[11px]">12</div>}
          </div>
        ))}
      </div>
      <div className="ml-auto flex items-center">
        <Svg w={13} h={8}><path d="M1 7l5.500-5.500L12 7" stroke="#ddd" strokeWidth="1.300" /></Svg>
        <Svg w={17} h={17} className="ml-[9px]"><path d="M10 2A6.700 6.700 0 1 0 15 10" stroke="#4772fa" strokeWidth="2" /><path d="M5 7l3 4 6-8" stroke="#ffb000" strokeWidth="2.500" /></Svg>
        <Svg w={17} h={12} className="ml-[6px]"><path d="M4 9a3.500 3.500 0 0 1 0-5 5 5 0 0 1 8-1 4 4 0 0 1 4 5z" fill="#aaa" /><path d="M3.500 12a3 3 0 0 1 0-5q2-1 4 0l4-1q5 1 5 3.500 0 2.500-3 2.500z" fill="#fff" /></Svg>
        <div className="ml-[17px] flex flex-col items-center pt-px leading-4"><Fit className="w-[19px]">ESP</Fit><Fit className="w-[12px]">ES</Fit></div>
        <Wifi size={17} strokeWidth={2} className="ml-[20px]" />
        <Volume2 size={17} strokeWidth={1.600} className="ml-[7px]" />
        <Svg w={17} h={13} className="ml-[7px]"><path d="M4.500 8v4h10V3H7M15 6h1.500v3H15" stroke="#fff" strokeWidth="1.300" /><path d="M8 5h5v5H7zM0 2h6v3L3 7 0 5zM1 0h1v3H1zM4 0h1v3H4z" fill="#fff" /></Svg>
        <div className="ml-[14px] mr-5 flex flex-col items-end leading-4"><Fit className="w-[29px]">22:40</Fit><Fit className="w-[60px]">27/01/2022</Fit></div>
      </div>
    </div>
  );
}

export default function App() {
  return (
    <div className="flex h-[1080px] w-[1920px] flex-col overflow-hidden bg-white font-['Noto_Sans',sans-serif]">
      <Header />
      <Ribbon />
      <main className="relative flex h-[854px] shrink-0 bg-[#fefefe]">
        <Document />
        <ReviewPane />
      </main>
      <StatusBar />
      <Taskbar />
    </div>
  );
}
